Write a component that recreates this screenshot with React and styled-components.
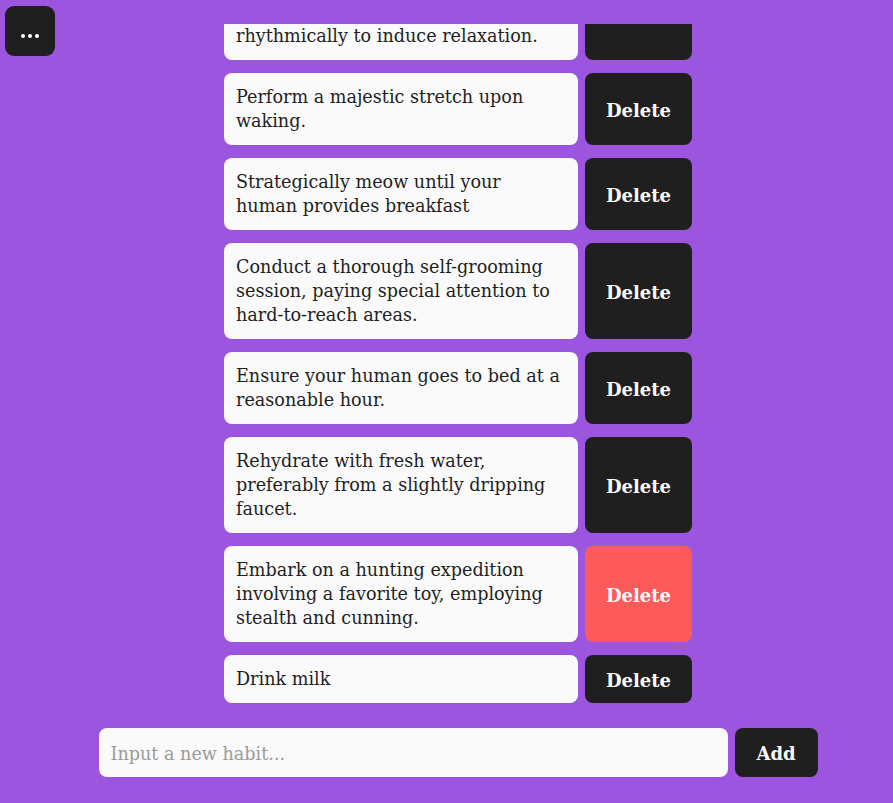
import React, { useEffect, useRef, useState } from "react";
import styled, { createGlobalStyle } from "styled-components";

const GlobalStyle = createGlobalStyle`
  html, body {
    margin: 0;
    padding: 0;
    background: #9c55df;
    height: 100%;
    overflow: hidden;
  }
  * { box-sizing: border-box; }
`;

const FONT = `"DejaVu Serif", "Liberation Serif", serif`;

const Page = styled.div`
  height: 803px;
  display: flex;
  flex-direction: column;
  align-items: center;
  padding: 24px 0 26px 23px;
  font-family: ${FONT};
`;

const MenuButton = styled.button`
  position: fixed;
  left: 5px;
  top: 6px;
  width: 50px;
  height: 50px;
  border: none;
  border-radius: 9px;
  background: #1f1f1f;
  display: flex;
  align-items: center;
  justify-content: center;
  padding: 0;
  cursor: pointer;
`;

const List = styled.div`
  height: 679px;
  width: 468px;
  overflow-y: auto;
  display: flex;
  flex-direction: column;
  gap: 13px;
  scrollbar-width: none;
  &::-webkit-scrollbar { display: none; }
`;

const Row = styled.div`
  display: flex;
  gap: 7px;
  flex-shrink: 0;
`;

const Card = styled.div`
  width: 354px;
  background: #fafafa;
  border-radius: 8px;
  padding: 12px;
  font-size: 17.6px;
  line-height: 24px;
  color: #1f1f1f;
`;

const ActionButton = styled.button`
  width: ${(p) => p.$width}px;
  flex-shrink: 0;
  border: none;
  border-radius: 8px;
  background: ${(p) => (p.$hot ? "#fd5b5b" : "#1f1f1f")};
  color: #fafafa;
  font-family: ${FONT};
  font-weight: bold;
  font-size: 18px;
  padding: 2px 0 0;
  cursor: pointer;
`;

const InputRow = styled.div`
  margin-top: 25px;
  display: flex;
  gap: 7px;
  height: 49px;
`;

const HabitInput = styled.input`
  width: 629px;
  height: 49px;
  border: none;
  border-radius: 8px;
  background: #fafafa;
  padding: 2px 12px 0;
  font-family: ${FONT};
  font-size: 17.6px;
  color: #1f1f1f;
  outline: none;
  &::placeholder { color: #9a9a9a; }
`;

const habits = [
  "Find a sunny spot and nap for at least three hours.",
  "Knock one object off the table to assert dominance.",
  "Knead a soft, fluffy blanket with your front paws, and purr rhythmically to induce relaxation.",
  "Perform a majestic stretch upon waking.",
  "Strategically meow until your human provides breakfast",
  "Conduct a thorough self-grooming session, paying special attention to hard-to-reach areas.",
  "Ensure your human goes to bed at a reasonable hour.",
  "Rehydrate with fresh water, preferably from a slightly dripping faucet.",
  "Embark on a hunting expedition involving a favorite toy, employing stealth and cunning.",
  "Drink milk",
];

export default function App() {
  const listRef = useRef(null);
  const [items] = useState(habits);

  useEffect(() => {
    if (listRef.current) listRef.current.scrollTop = listRef.current.scrollHeight;
  }, [items]);

  return (
    <>
      <GlobalStyle />
      <MenuButton aria-label="menu">
        <svg width="20" height="20" viewBox="0 0 20 20">
          <circle cx="3" cy="15" r="2" fill="#fff" />
          <circle cx="10" cy="15" r="2" fill="#fff" />
          <circle cx="17" cy="15" r="2" fill="#fff" />
        </svg>
      </MenuButton>
      <Page>
        <List ref={listRef}>
          {items.map((h, i) => (
            <Row key={i}>
              <Card>{h}</Card>
              <ActionButton $width={107} $hot={i === items.length - 2}>
                Delete
              </ActionButton>
            </Row>
          ))}
        </List>
        <InputRow>
          <HabitInput placeholder="Input a new habit..." />
          <ActionButton $width={83}>Add</ActionButton>
        </InputRow>
      </Page>
    </>
  );
}
